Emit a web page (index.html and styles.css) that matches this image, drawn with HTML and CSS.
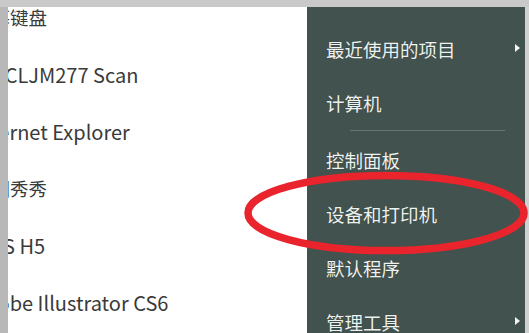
FILE: index.html
```html
<!DOCTYPE html>
<html lang="zh-CN">
<head>
<meta charset="utf-8">
<title>开始菜单</title>
<link rel="stylesheet" href="styles.css">
</head>
<body>
<div class="screen">
  <div class="topbar"></div>
  <div class="main">
    <div class="leftedge"></div>
    <div class="programs">
      <ul class="prog-list">
        <li>屏幕键盘</li>
        <li class="latin">HP CLJM277 Scan</li>
        <li class="latin">Internet Explorer</li>
        <li>美图秀秀</li>
        <li class="latin">WPS H5</li>
        <li class="latin">Adobe Illustrator CS6</li>
      </ul>
    </div>
    <div class="places">
      <ul class="place-list">
        <li class="has-sub">最近使用的项目<span class="arrow"></span></li>
        <li>计算机</li>
        <li class="sep"></li>
        <li>控制面板</li>
        <li>设备和打印机</li>
        <li>默认程序</li>
        <li class="has-sub">管理工具<span class="arrow"></span></li>
      </ul>
    </div>
    <div class="rightedge"></div>
  </div>
  <svg class="mark" width="529" height="333" viewBox="0 0 529 333">
    <ellipse cx="386" cy="213" rx="138" ry="37.5" fill="none" stroke="#ea242c" stroke-width="7.5"/>
  </svg>
</div>
</body>
</html>
```

FILE: styles.css
```css
html, body {
  margin: 0;
  padding: 0;
}
body {
  width: 529px;
  height: 333px;
  overflow: hidden;
  background: #ffffff;
  font-family: "Noto Sans CJK SC", "Noto Sans", sans-serif;
}
.screen {
  position: relative;
  width: 529px;
  height: 333px;
  display: flex;
  flex-direction: column;
  overflow: hidden;
}
.topbar {
  height: 7px;
  background: #c9c9c9;
  flex: none;
}
.main {
  flex: 1;
  display: flex;
  min-height: 0;
}
.leftedge {
  width: 8px;
  background: #b8b8b8;
  flex: none;
}
.programs {
  width: 299px;
  flex: none;
  background: #ffffff;
  overflow: hidden;
}
.prog-list {
  list-style: none;
  margin: -18px 0 0 -35px;
  padding: 0;
}
.prog-list li {
  height: 57px;
  line-height: 57px;
  font-size: 18.5px;
  color: #3a3a3a;
  white-space: nowrap;
}
.prog-list li.latin {
  font-size: 20px;
}
.places {
  width: 218px;
  flex: none;
  background: #42524e;
  overflow: hidden;
}
.place-list {
  list-style: none;
  margin: 0;
  padding: 15px 5px 0 19px;
}
.place-list li {
  height: 54px;
  display: flex;
  align-items: center;
  justify-content: space-between;
  font-size: 18.5px;
  color: #eef2f0;
  white-space: nowrap;
  text-shadow: 0 0 1px rgba(0, 0, 0, 0.35);
}
.place-list li.sep {
  height: 1px;
  margin: 0 15px 2px 24px;
  background: #67766f;
}
.arrow {
  width: 0;
  height: 0;
  border-top: 4px solid transparent;
  border-bottom: 4px solid transparent;
  border-left: 5px solid #f4f4f4;
  margin-top: -3px;
}
.rightedge {
  flex: 1;
  background: #cfd1d0;
}
.mark {
  position: absolute;
  left: 0;
  top: 0;
  pointer-events: none;
}
```
